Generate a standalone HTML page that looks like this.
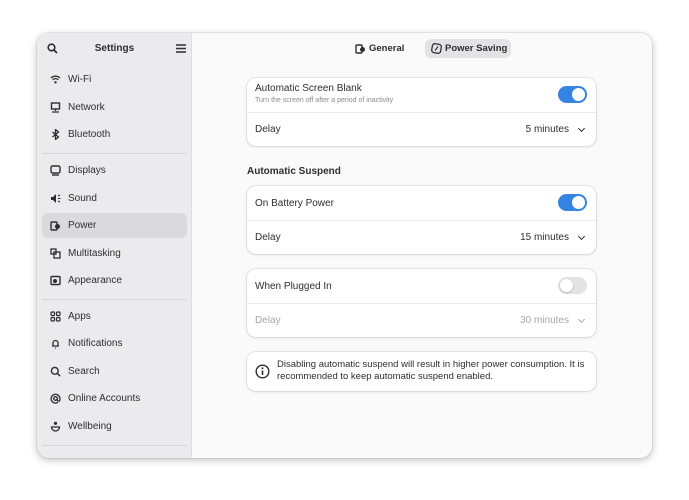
<!DOCTYPE html>
<html><head><style>
*{box-sizing:border-box;margin:0;padding:0}
body{width:689px;height:500px;background:#fff;font-family:"Liberation Sans","DejaVu Sans",sans-serif;position:relative;overflow:hidden;color:#2e2e32}
.win{position:absolute;left:37px;top:33px;width:615px;height:425px;border-radius:12px;overflow:hidden;background:#fafafb;box-shadow:0 2px 8px rgba(0,0,0,.25),0 0 0 1px rgba(0,0,0,.06)}
.side{position:absolute;left:0;top:0;width:155px;height:425px;background:#ebebed;border-right:1px solid #dedee0}
.title{position:absolute;top:10px;left:0;width:155px;text-align:center;font-size:10px;font-weight:bold}
.it{position:absolute;left:5px;width:145px;height:25px;border-radius:6px;font-size:10px;line-height:25px;padding-left:26px}
.it.sel{background:#dadadc}
.it svg{position:absolute;left:8px;top:7px}
.sep{position:absolute;left:5px;width:145px;height:1px;background:#d6d6d8}
.card{position:absolute;left:210px;width:349px;background:#fff;border-radius:9px;box-shadow:0 0 0 1px rgba(0,0,0,.07),0 1px 3px rgba(0,0,0,.1)}
.row{position:absolute;left:0;width:349px;font-size:10px;padding-left:8px}
.div{position:absolute;left:0;width:349px;height:1px;background:#ebebeb}
.tog{position:absolute;right:9px;width:29px;height:17px;border-radius:9px;background:#3584e4}
.tog::after{content:"";position:absolute;top:2px;right:2px;width:13px;height:13px;border-radius:50%;background:#fff}
.tog.off{background:#e3e3e5}.tog.off::after{right:auto;left:2px;box-shadow:0 1px 2px rgba(0,0,0,.2)}
.val{position:absolute;right:27px;font-size:10px}
.chev{position:absolute;right:12px;width:5px;height:5px;border-right:1.5px solid #2e2e32;border-bottom:1.5px solid #2e2e32;transform:rotate(45deg)}
</style></head><body>
<div class="win">
<div class="side">
<svg style="position:absolute;left:10px;top:10px" width="11" height="11" viewBox="0 0 11 11"><circle cx="4.5" cy="4.5" r="3.3" fill="none" stroke="#2e2e32" stroke-width="1.6"/><path d="M7 7l3 3" stroke="#2e2e32" stroke-width="1.8"/></svg>
<div class="title">Settings</div>
<svg style="position:absolute;left:139px;top:11px" width="10" height="9"><path d="M0 1h10M0 4.5h10M0 8h10" stroke="#2e2e32" stroke-width="1.5"/></svg>
<div class="it" style="top:34px"><svg width="11" height="11" viewBox="0 0 11 11"><path d="M1 4a6.5 6.5 0 0 1 9 0M2.6 5.8a4.2 4.2 0 0 1 5.8 0" fill="none" stroke="#2e2e32" stroke-width="1.3"/><circle cx="5.5" cy="8.3" r="1.2" fill="#2e2e32"/></svg>Wi-Fi</div>
<div class="it" style="top:62px"><svg width="11" height="11"><rect x="1.5" y="1" width="8" height="6" fill="none" stroke="#2e2e32" stroke-width="1.4"/><path d="M5.5 7v2M2 10h7" stroke="#2e2e32" stroke-width="1.3"/></svg>Network</div>
<div class="it" style="top:89px"><svg width="11" height="11"><path d="M2.5 3l6 5-3 2.5V0.5l3 2.5-6 5" fill="none" stroke="#2e2e32" stroke-width="1.3"/></svg>Bluetooth</div>
<div class="sep" style="top:120px"></div>
<div class="it" style="top:125px"><svg width="11" height="11"><rect x="1" y="1" width="9" height="7" rx="1.5" fill="none" stroke="#2e2e32" stroke-width="1.4"/><path d="M2 10h7" stroke="#2e2e32" stroke-width="1.4"/></svg>Displays</div>
<div class="it" style="top:153px"><svg width="11" height="11"><path d="M1 4h2l3-3v9L3 7H1z" fill="#2e2e32"/><path d="M8 3l2-1M8 5.5h2.5M8 8l2 1" stroke="#2e2e32" stroke-width="1.1"/></svg>Sound</div>
<div class="it sel" style="top:180px"><svg width="11" height="11"><rect x="1" y="2" width="6" height="8" rx="1" fill="none" stroke="#2e2e32" stroke-width="1.4"/><circle cx="7.5" cy="6.5" r="2.5" fill="#2e2e32"/></svg>Power</div>
<div class="it" style="top:208px"><svg width="11" height="11"><rect x="1" y="1" width="5" height="5" fill="none" stroke="#2e2e32" stroke-width="1.3"/><rect x="4" y="4" width="6" height="6" fill="none" stroke="#2e2e32" stroke-width="1.3"/></svg>Multitasking</div>
<div class="it" style="top:235px"><svg width="11" height="11"><rect x="1" y="1.5" width="9" height="8" rx="1" fill="none" stroke="#2e2e32" stroke-width="1.4"/><circle cx="5" cy="6" r="2" fill="#2e2e32"/></svg>Appearance</div>
<div class="sep" style="top:266px"></div>
<div class="it" style="top:271px"><svg width="11" height="11"><rect x="1" y="1" width="3.5" height="3.5" rx="1" fill="none" stroke="#2e2e32" stroke-width="1.2"/><rect x="6.5" y="1" width="3.5" height="3.5" rx="1" fill="none" stroke="#2e2e32" stroke-width="1.2"/><rect x="1" y="6.5" width="3.5" height="3.5" rx="1" fill="none" stroke="#2e2e32" stroke-width="1.2"/><rect x="6.5" y="6.5" width="3.5" height="3.5" rx="1" fill="none" stroke="#2e2e32" stroke-width="1.2"/></svg>Apps</div>
<div class="it" style="top:298px"><svg width="11" height="11"><path d="M3 8V5a2.5 2.5 0 0 1 5 0v3H2h7M5.5 9.5v1" fill="none" stroke="#2e2e32" stroke-width="1.3"/></svg>Notifications</div>
<div class="it" style="top:326px"><svg width="11" height="11"><circle cx="4.8" cy="4.8" r="3.4" fill="none" stroke="#2e2e32" stroke-width="1.4"/><path d="M7.3 7.3l2.8 2.8" stroke="#2e2e32" stroke-width="1.5"/></svg>Search</div>
<div class="it" style="top:353px"><svg width="11" height="11"><circle cx="5.5" cy="5.5" r="1.8" fill="none" stroke="#2e2e32" stroke-width="1.3"/><path d="M7.3 5.5v1.3a1.3 1.3 0 0 0 2.6 0V5.5A4.4 4.4 0 1 0 8 9.3" fill="none" stroke="#2e2e32" stroke-width="1.3"/></svg>Online Accounts</div>
<div class="it" style="top:381px"><svg width="11" height="11"><circle cx="5.5" cy="2.3" r="1.6" fill="#2e2e32"/><path d="M1.5 6h8a4 4 0 0 1-8 0z" fill="none" stroke="#2e2e32" stroke-width="1.3"/></svg>Wellbeing</div>
<div class="sep" style="top:412px"></div>
</div>
<svg style="position:absolute;left:318px;top:10px" width="11" height="11"><rect x="1" y="2" width="6" height="8" rx="1" fill="none" stroke="#2e2e32" stroke-width="1.4"/><circle cx="7.5" cy="6.5" r="2.5" fill="#2e2e32"/></svg>
<div style="position:absolute;left:332px;top:10px;font-size:9.5px;font-weight:bold">General</div>
<div style="position:absolute;left:388px;top:6px;width:86px;height:19px;border-radius:6px;background:#e3e3e5"></div>
<svg style="position:absolute;left:394px;top:10px" width="11" height="11"><rect x="1" y="1" width="9" height="9" rx="2.5" fill="none" stroke="#2e2e32" stroke-width="1.3" transform="rotate(10 5.5 5.5)"/><path d="M4 7.5l3-4" stroke="#2e2e32" stroke-width="1.1"/></svg>
<div style="position:absolute;left:408px;top:10px;font-size:9.5px;font-weight:bold">Power Saving</div>

<div class="card" style="top:45px;height:68px">
<div class="row" style="top:5px">Automatic Screen Blank</div>
<div class="row" style="top:19px;font-size:7px;color:#8a8a8d">Turn the screen off after a period of inactivity</div>
<div class="tog" style="top:8px"></div>
<div class="div" style="top:34px"></div>
<div class="row" style="top:46px">Delay</div>
<div class="val" style="top:46px">5 minutes</div><div class="chev" style="top:48px"></div>
</div>
<div style="position:absolute;left:210px;top:133px;font-size:10px;font-weight:bold">Automatic Suspend</div>
<div class="card" style="top:153px;height:68px">
<div class="row" style="top:12px">On Battery Power</div>
<div class="tog" style="top:8px"></div>
<div class="div" style="top:34px"></div>
<div class="row" style="top:46px">Delay</div>
<div class="val" style="top:46px">15 minutes</div><div class="chev" style="top:48px"></div>
</div>
<div class="card" style="top:236px;height:68px">
<div class="row" style="top:12px">When Plugged In</div>
<div class="tog off" style="top:8px"></div>
<div class="div" style="top:34px"></div>
<div class="row" style="top:46px;color:#a8a8aa">Delay</div>
<div class="val" style="top:46px;color:#a8a8aa">30 minutes</div><div class="chev" style="top:48px;border-color:#a8a8aa"></div>
</div>
<div class="card" style="top:319px;height:39px">
<svg style="position:absolute;left:8px;top:12px" width="15" height="15"><circle cx="7.5" cy="7.5" r="6.3" fill="none" stroke="#2e2e32" stroke-width="1.4"/><path d="M7.5 6.5v4.5" stroke="#2e2e32" stroke-width="1.6"/><circle cx="7.5" cy="4.3" r="1" fill="#2e2e32"/></svg>
<div style="position:absolute;left:30px;top:7px;width:315px;font-size:9.5px;line-height:12px">Disabling automatic suspend will result in higher power consumption. It is recommended to keep automatic suspend enabled.</div>
</div>
</div>
</body></html>
